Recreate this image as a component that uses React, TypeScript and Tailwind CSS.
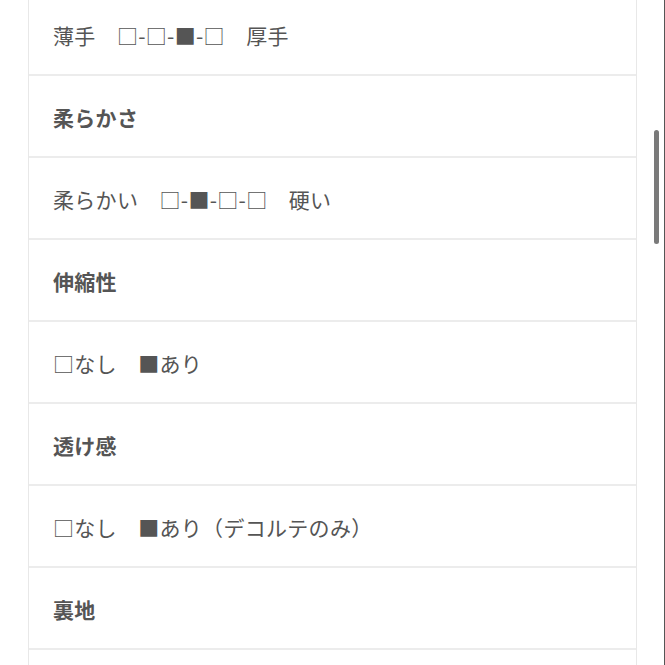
import React from "react";

const rows: { text: string; head?: boolean }[] = [
  { text: "薄手　□-□-■-□　厚手" },
  { text: "柔らかさ", head: true },
  { text: "柔らかい　□-■-□-□　硬い" },
  { text: "伸縮性", head: true },
  { text: "□なし　■あり" },
  { text: "透け感", head: true },
  { text: "□なし　■あり（デコルテのみ）" },
  { text: "裏地", head: true },
  { text: "" },
];

export default function App() {
  return (
    <div
      className="relative w-[665px] h-[665px] overflow-hidden bg-white border-r border-[#555]"
      style={{ fontFamily: '"Noto Sans CJK JP", "Noto Sans", sans-serif' }}
    >
      <div className="ml-[28px] w-[609px] -mt-[6px] border-x border-[#e8e8e8]">
        {rows.map((r, i) => (
          <div
            key={i}
            className={`h-[82px] flex items-center px-[24px] pt-[3px] border-b-2 border-[#ececec] text-[21px] tracking-[0.3px] text-[#555] ${
              r.head ? "font-bold" : "font-normal"
            }`}
          >
            {r.text}
          </div>
        ))}
      </div>
      <div className="absolute left-[654px] top-[130px] w-[5px] h-[114px] rounded-full bg-[#7a7a7a]" />
    </div>
  );
}
